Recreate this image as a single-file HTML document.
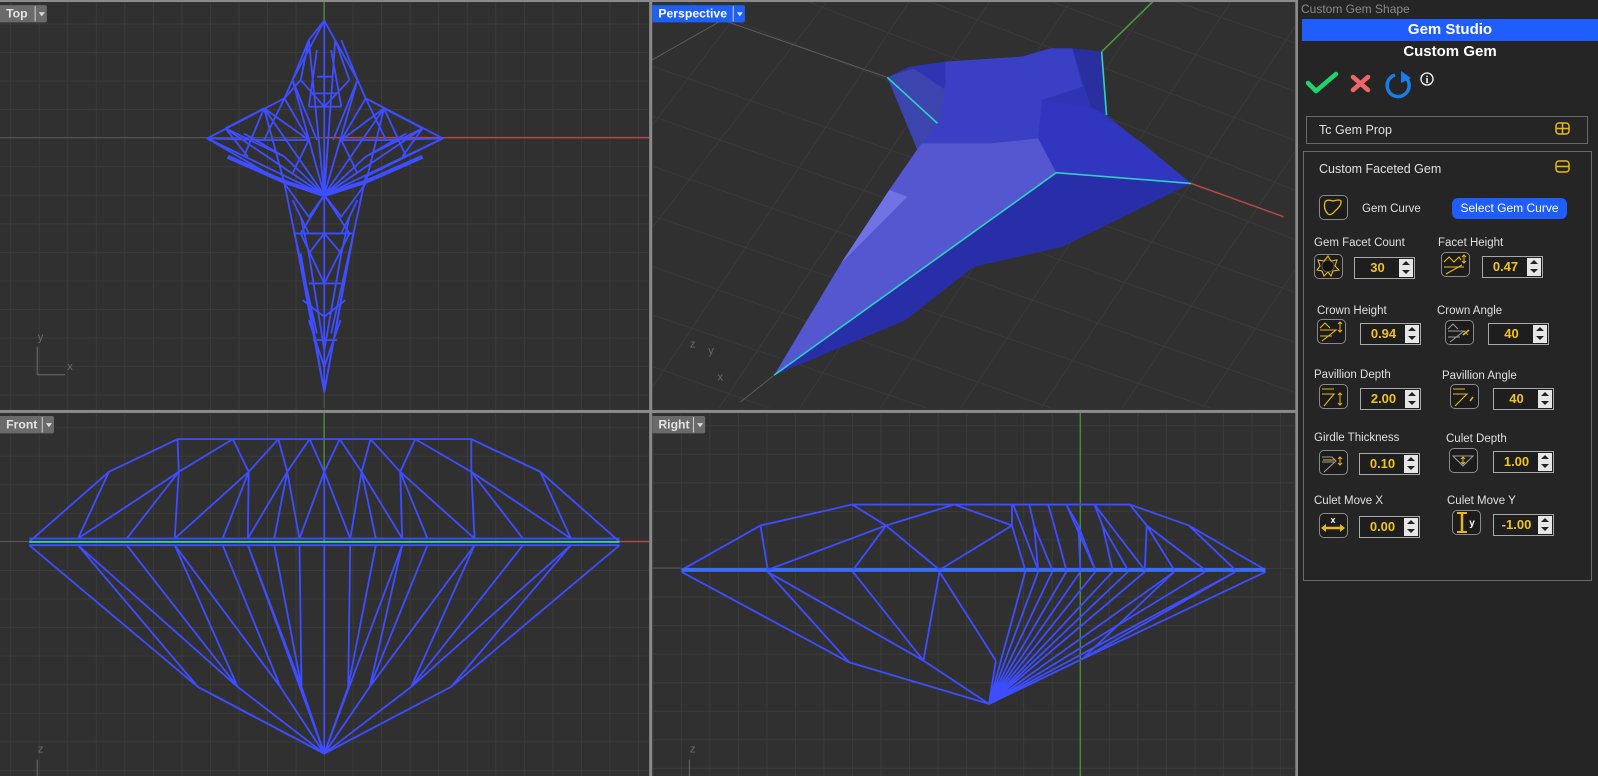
<!DOCTYPE html>
<html><head><meta charset="utf-8"><style>
*{margin:0;padding:0;box-sizing:border-box}
body{width:1598px;height:776px;overflow:hidden;background:#252525;font-family:"Liberation Sans",sans-serif;position:relative}
#vl{position:absolute;left:0;top:0;width:1568px;height:761px;transform:scale(1.0191,1.0197);transform-origin:0 0;background:#8a8a8a}
.vp{position:absolute;overflow:hidden;background-color:#303030;
background-image:linear-gradient(#3b3b3b 1px,transparent 1px),linear-gradient(90deg,#3b3b3b 1px,transparent 1px);background-size:28px 28px}
.tab{position:absolute;left:0;top:3px;height:17px;background:#6a6a6a;color:#e4e4e4;font-size:12px;font-weight:bold;line-height:17px;padding-left:6px;border-radius:0 2px 2px 0}
.tab i{position:absolute;right:0;top:1px;width:12px;height:15px;border-left:1px solid #ccc;font-style:normal}
.tab i:after{content:"";position:absolute;left:3px;top:6px;border:3px solid transparent;border-top:4px solid #ddd}
.ax{position:absolute;color:#6a6a6a;font-size:11px}
svg{position:absolute;left:0;top:0}
.p{position:absolute}
.t{position:absolute;color:#e0e0e0;font-size:11.5px;white-space:nowrap}
.in{position:absolute;width:61px;height:22px;border:1px solid #a8a8a8;background:#1e1e1e}
.in b{position:absolute;left:0;width:45px;top:0;line-height:20px;text-align:center;color:#f2c41a;font-size:13px}
.in s{position:absolute;right:1px;top:1px;width:14px;height:18px;background:#e6e6e6}
.in s:before{content:"";position:absolute;left:3px;top:2px;border:4px solid transparent;border-bottom:4px solid #222;border-top:0}
.in s:after{content:"";position:absolute;left:3px;top:11px;border:4px solid transparent;border-top:4px solid #222;border-bottom:0}
.ic{position:absolute;width:29px;height:25px;border:1.5px solid #8a8a8a;border-radius:5px;background:#1c1c1c}
</style></head><body>
<div id="vl">
<!-- TOP -->
<div class="vp" style="left:0;top:2px;width:637px;height:400px;background-position:10px 21px">
<svg width="637" height="400" style="top:-2px">
<line x1="318" y1="0" x2="318" y2="135" stroke="#4a9a3a" stroke-width="1.2"/>
<line x1="318" y1="135" x2="637" y2="135" stroke="#b04848" stroke-width="1.5"/>
<line x1="0" y1="135" x2="318" y2="135" stroke="#585858"/>
<line x1="318" y1="135" x2="318" y2="400" stroke="#585858"/>
<g transform="scale(0.3987,0.327)" fill="none" stroke="#3d4dff" stroke-width="1.8" stroke-linejoin="round">
<path vector-effect="non-scaling-stroke" d="M798,62 L880,240 L900,295 L1090,415 L900,530 L870,700 L798,1175 L725,700 L700,550 L510,415 L700,295 L720,240 Z"/>
<path vector-effect="non-scaling-stroke" d="M798,62 V1175 M798,585 L510,415 M798,585 L555,385 M798,585 L650,325 M798,585 L720,240 M798,585 L760,120 M798,585 L825,120 M798,585 L880,240 M798,585 L945,325 M798,585 L1040,385 M798,585 L1090,415 M760,120 L798,62 M825,120 L860,240 M760,120 L740,240 L700,295 M650,325 L700,550 M945,325 L900,550 M555,385 L650,325 M1040,385 L945,325 M555,385 L700,470 L798,585 M1040,385 L900,470 L798,585 M700,295 L760,420 M900,295 L840,420 M760,320 L840,320 M798,585 L740,700 L798,850 L860,700 L798,585 M725,700 L780,1000 M870,700 L815,1000 M740,700 L870,700 M725,700 L860,700 M760,850 L840,850 M770,1020 L830,1020 M720,600 L760,700 M880,600 L840,700 M740,760 L798,1175 M860,760 L798,1175
M825,120 L798,585 M780,150 L760,320 M815,150 L840,320 M760,120 L720,240 M840,120 L880,240 M720,240 L780,420 M880,240 L820,420 M740,240 L798,320 M860,240 L798,320 M650,325 L760,420 M945,325 L840,420 M650,325 L600,470 M945,325 L1000,470 M555,385 L610,470 M1040,385 L990,470 M700,295 L650,420 M900,295 L950,420 M510,415 L650,420 L760,420 M1090,415 L950,420 L840,420 M600,400 L700,470 M1000,400 L900,470 M760,420 L720,520 M840,420 L880,520 M700,550 L760,650 L798,585 M900,550 L840,650 L798,585 M740,650 L760,760 L798,700 L840,760 L860,650 M760,760 L798,1050 M840,760 L798,1050 M745,900 L798,950 L850,900 M760,960 L798,1100 L838,960 M780,230 L820,230 M770,280 L830,280"/>
<path vector-effect="non-scaling-stroke" stroke-width="4" d="M560,470 L700,545 L798,585 L900,545 L1040,470"/>
</g>
</svg>
<div class="ax" style="left:37px;top:323px">y</div>
<div class="ax" style="left:66px;top:352px">x</div>
<div style="position:absolute;left:36px;top:338px;width:1px;height:27px;background:#6a6a6a"></div>
<div style="position:absolute;left:36px;top:365px;width:28px;height:1px;background:#6a6a6a"></div>
<div class="tab" style="width:46px">Top<i></i></div>
</div>
<!-- PERSPECTIVE -->
<div class="vp" style="left:640px;top:2px;width:631px;height:400px;background:#303030">
<svg width="631" height="400" style="top:-2px">
<g transform="translate(-12.2,0) scale(0.3948,0.327)">
<g stroke="#3a3a3a" stroke-width="1">
<path vector-effect="non-scaling-stroke" d="M-200,100 L1800,950 M-200,250 L1800,1100 M-200,400 L1800,1250 M-200,550 L1600,1300 M-200,700 L1200,1300 M-200,850 L900,1300 M-200,1000 L500,1300 M0,-50 L1800,800 M300,-50 L1800,650 M600,-50 L1800,500 M900,-50 L1800,350 M1200,-50 L1800,200 M1500,-50 L1800,80
M-100,1400 L700,-50 M100,1400 L900,-50 M300,1400 L1100,-50 M500,1400 L1300,-50 M700,1400 L1500,-50 M900,1400 L1700,-50 M1100,1400 L1800,150 M1300,1400 L1800,500 M-300,1200 L500,-50 M-300,900 L300,-50"/>
</g>
<path d="M205,60 L615,232 M30,180 L205,60" stroke="#5a5a5a" stroke-width="1" vector-effect="non-scaling-stroke" fill="none"/>
<path d="M334,1125 L250,1206" stroke="#5a5a5a" vector-effect="non-scaling-stroke"/>
<path d="M1370,550 L1600,650" stroke="#b04848" stroke-width="1.5" vector-effect="non-scaling-stroke"/>
<path d="M1148,155 L1275,5" stroke="#4a9a3a" stroke-width="1.5" vector-effect="non-scaling-stroke"/>
<path fill="#2e35b5" d="M334,1125 L620,570 L700,430 L615,232 L670,200 L760,185 L950,170 L1020,145 L1075,145 L1148,155 L1160,345 L1370,550 L1050,740 L830,800 L660,960 Z"/>
<path fill="#3a40c4" d="M700,430 L740,370 L760,250 L760,185 L950,170 L1020,145 L1075,145 L1100,260 L1000,300 L990,415 L870,430 Z"/>
<path fill="#3c44ad" d="M615,232 L680,205 L760,270 L740,370 L690,450 Z"/>
<path fill="#2a2fa0" d="M1075,145 L1148,155 L1160,345 L1120,320 L1100,240 Z"/>
<path fill="#3036bf" d="M990,415 L1000,300 L1110,320 L1250,430 L1370,550 L1035,518 Z"/>
<path fill="#5457cf" d="M334,1125 L500,790 L620,570 L700,430 L870,430 L990,415 L1035,518 Z"/>
<path fill="#7073e3" d="M500,790 L620,570 L665,590 Z"/>
<path fill="#282ea8" d="M1035,518 L1370,550 L1050,740 L830,800 L660,960 L334,1125 Z"/>
<path d="M334,1125 L1035,518 L1370,550 M615,232 L740,370 M1148,155 L1160,345" stroke="#2ecfc0" stroke-width="1.6" fill="none" vector-effect="non-scaling-stroke"/>
</g>
</svg>
<div class="ax" style="left:37px;top:330px">z</div>
<div class="ax" style="left:55px;top:336px">y</div>
<div class="ax" style="left:64px;top:362px">x</div>
<div class="tab" style="width:91px;background:#1e60f5;color:#fff">Perspective<i></i></div>
</div>
<!-- FRONT -->
<div class="vp" style="left:0;top:405px;width:637px;height:356px;background-position:10px 14px">
<svg width="637" height="356">
<line x1="318" y1="0" x2="318" y2="126" stroke="#4a9a3a" stroke-width="1.2"/>
<line x1="608" y1="126" x2="637" y2="126" stroke="#b04848" stroke-width="1.5"/>
<line x1="0" y1="126" x2="28" y2="126" stroke="#585858"/>
<g transform="translate(0,-12.6) scale(0.3987,0.327)" fill="none" stroke="#3d4dff" stroke-width="1.8">
<path vector-effect="non-scaling-stroke" d="M72,425 L268,215 L437,117 L1160,117 L1330,215 L1525,425 M72,415 H1525 M72,435 H1525 M72,435 L487,860 L798,1060 L1110,860 L1525,435"/>
<path vector-effect="non-scaling-stroke" d="M268,215 L192,415 M440,215 L437,117 M440,215 L573,117 M612,215 L573,117 M612,215 L685,117 M707,215 L685,117 M707,215 L762,117 M798,215 L762,117 M798,215 L836,117 M890,215 L836,117 M890,215 L912,117 M985,215 L912,117 M985,215 L1022,117 M1160,215 L1022,117 M1160,215 L1160,117 M1330,215 L1160,117 M440,215 L192,415 M440,215 L312,415 M440,215 L430,415 M612,215 L430,415 M612,215 L548,415 M612,215 L610,415 M707,215 L610,415 M707,215 L675,415 M707,215 L737,415 M798,215 L737,415 M798,215 L798,415 M798,215 L862,415 M890,215 L862,415 M890,215 L925,415 M890,215 L990,415 M985,215 L990,415 M985,215 L1052,415 M1160,215 L1168,415 M1160,215 L1287,415 M1160,215 L1405,415 M1330,215 L1405,415 M985,215 L1168,415"/>
<path vector-effect="non-scaling-stroke" d="M192,435 L487,860 M192,435 L585,860 M312,435 L585,860 M430,435 L585,860 M430,435 L690,860 M548,435 L690,860 M610,435 L742,860 M675,435 L742,860 M737,435 L742,860 M798,435 L798,1060 M862,435 L857,860 M925,435 L857,860 M990,435 L910,860 M1052,435 L910,860 M1168,435 L1012,860 M1168,435 L910,860 M1287,435 L1012,860 M1405,435 L1012,860 M1405,435 L1110,860 M487,860 L798,1060 M585,860 L798,1060 M690,860 L798,1060 M742,860 L798,1060 M857,860 L798,1060 M910,860 L798,1060 M1012,860 L798,1060 M610,435 L798,1060 M990,435 L798,1060"/>
<path vector-effect="non-scaling-stroke" stroke="#2ecfa0" stroke-width="2" d="M72,425 H1525"/>
</g>
</svg>
<div class="ax" style="left:37px;top:324px">z</div>
<div style="position:absolute;left:36px;top:340px;width:1px;height:20px;background:#6a6a6a"></div>
<div class="tab" style="width:53px">Front<i></i></div>
</div>
<!-- RIGHT -->
<div class="vp" style="left:640px;top:405px;width:631px;height:356px;background-position:0 12px">
<svg width="631" height="356">
<line x1="420" y1="0" x2="420" y2="356" stroke="#4a9a3a" stroke-width="1.2"/>
<line x1="0" y1="152" x2="28" y2="152" stroke="#585858"/>
<g transform="translate(-12.2,-10.6) scale(0.3948,0.327)" fill="none" stroke="#3d4dff" stroke-width="1.8">
<path vector-effect="non-scaling-stroke" d="M104,503 L300,370 L528,307 L1218,307 L1365,370 L1555,503 M104,509 L520,780 L868,905 L1100,770 L1555,509"/>
<path vector-effect="non-scaling-stroke" stroke="#3a6cf0" stroke-width="4" d="M104,503 H1555"/>
<path vector-effect="non-scaling-stroke" d="M300,370 L318,503 M528,307 L612,370 M612,370 L318,503 M612,370 L530,503 M612,370 L745,503 M612,370 L782,307 M782,307 L925,370 M925,370 L745,503 M925,370 L958,503 M925,307 L925,370 M968,307 L980,370 M980,370 L990,503 M980,370 L1025,503 M1015,307 L1030,370 M1030,370 L1060,503 M1060,307 L1090,370 M1090,370 L1095,503 M1090,370 L1132,503 M1130,307 L1150,370 M1150,370 L1175,503 M1150,370 L1213,503 M1218,307 L1260,370 M1260,370 L1255,503 M1260,370 L1328,503 M1365,370 L1480,503 M1260,370 L1405,503 M928,307 L990,503 M1060,307 L1132,503 M1130,307 L1255,503"/>
<path vector-effect="non-scaling-stroke" d="M318,509 L520,780 M318,509 L705,775 M530,509 L705,775 M745,509 L705,775 M745,509 L885,775 M705,775 L868,905 M885,775 L868,905 M958,509 L868,905 M990,509 L868,905 M1025,509 L868,905 M1060,509 L868,905 M1095,509 L868,905 M1132,509 L868,905 M1175,509 L868,905 M1213,509 L868,905 M1255,509 L868,905 M1328,509 L868,905 M1405,509 L868,905 M1480,509 L868,905 M1328,509 L1100,770 M1480,509 L1100,770"/>
</g>
</svg>
<div class="ax" style="left:37px;top:324px">z</div>
<div style="position:absolute;left:36px;top:340px;width:1px;height:20px;background:#6a6a6a"></div>
<div class="tab" style="width:52px">Right<i></i></div>
</div>
</div>

<!-- PANEL -->
<div class="p" style="left:1296px;top:0;width:2px;height:776px;background:#8a8a8a"></div>
<div class="p" style="left:1298px;top:0;width:300px;height:776px;background:#252525"></div>
<div class="t" style="left:1301px;top:2px;color:#8a8a8a;font-size:12px">Custom Gem Shape</div>
<div class="p" style="left:1302px;top:19px;width:296px;height:22px;background:#1f5dff;color:#fff;font-weight:bold;font-size:15px;text-align:center;line-height:22px">Gem Studio</div>
<div class="p" style="left:1302px;top:43px;width:296px;color:#fff;font-weight:bold;font-size:15px;text-align:center">Custom Gem</div>
<svg class="p" style="left:1305px;top:70px" width="135" height="30">
<path d="M3,13 L11,21 L31,4" stroke="#20d36a" stroke-width="4.5" fill="none" stroke-linecap="round" stroke-linejoin="round"/>
<path d="M48,7 L63,20 M63,7 L48,20" stroke="#f06666" stroke-width="4.5" stroke-linecap="round"/>
<path d="M90,5 A11,11 0 1 0 102,9" stroke="#1a7ee8" stroke-width="3.5" fill="none"/>
<path d="M96,1 L106,8 L96,13 Z" fill="#1a7ee8"/>
<circle cx="122" cy="9" r="6" stroke="#fff" stroke-width="1.3" fill="none"/>
<text x="122" y="13" fill="#fff" font-size="10" font-weight="bold" text-anchor="middle" font-family="Liberation Serif">i</text>
</svg>
<div class="p" style="left:1306px;top:116px;width:282px;height:28px;border:1.5px solid #6a6a6a"></div>
<div class="t" style="left:1319px;top:123px;font-size:12.5px">Tc Gem Prop</div>
<svg class="p" style="left:1555px;top:122px" width="16" height="14"><rect x="1" y="1" width="13" height="11" rx="3" fill="none" stroke="#e8b81a" stroke-width="1.5"/><path d="M7.5,1 V12 M1,6.5 H14" stroke="#e8b81a" stroke-width="1.5"/></svg>
<div class="p" style="left:1303px;top:151px;width:289px;height:430px;border:1.5px solid #6a6a6a"></div>
<div class="t" style="left:1319px;top:162px;font-size:12.5px">Custom Faceted Gem</div>
<svg class="p" style="left:1555px;top:160px" width="16" height="14"><rect x="1" y="1" width="13" height="11" rx="3" fill="none" stroke="#e8b81a" stroke-width="1.5"/><path d="M1,6.5 H14" stroke="#e8b81a" stroke-width="1.5"/></svg>
<div class="ic" style="left:1319px;top:195px"><svg width="26" height="22"><path d="M5,6 Q7,3 13,5 Q20,3 21,5 Q22,9 15,15 Q11,20 8,18 Q3,13 5,6 Z" fill="none" stroke="#e8b81a" stroke-width="1.3"/></svg></div>
<div class="t" style="left:1362px;top:203px">Gem Curve</div>
<div class="p" style="left:1452px;top:198px;width:115px;height:21px;background:#1f5dff;border-radius:6px;color:#fff;font-size:12px;text-align:center;line-height:21px">Select Gem Curve</div>

<div class="t" style="left:1314px;top:237px">Gem Facet Count</div>
<div class="t" style="left:1438px;top:237px">Facet Height</div>
<div class="ic" style="left:1314px;top:254px"><svg width="26" height="22"><circle cx="13" cy="11" r="6" fill="#111" stroke="#555"/><path d="M13,1 L16,6 L22,5 L20,11 L24,15 L18,16 L16,21 L13,17 L9,21 L7,16 L2,15 L5,11 L3,5 L9,6 Z" fill="none" stroke="#e8b81a" stroke-width="1.1"/></svg></div>
<div class="in" style="left:1354px;top:257px"><b>30</b><s></s></div>
<div class="ic" style="left:1441px;top:252px"><svg width="26" height="22"><path d="M2,9 L7,4 L12,9 L17,4 L19,7 M2,14 L22,14 M4,21 L20,12" fill="none" stroke="#e8b81a" stroke-width="1.1"/><path d="M22,2 V10 M20,4 L22,2 L24,4 M20,8 L22,10 L24,8" stroke="#e8b81a" fill="none"/></svg></div>
<div class="in" style="left:1482px;top:256px"><b>0.47</b><s></s></div>

<div class="t" style="left:1317px;top:305px">Crown Height</div>
<div class="t" style="left:1437px;top:305px">Crown Angle</div>
<div class="ic" style="left:1317px;top:319px"><svg width="26" height="22"><path d="M2,8 L7,3 L12,8 M2,10 H18 L4,21 M2,16 H14" fill="none" stroke="#e8b81a" stroke-width="1.1"/><path d="M22,2 V12 M20,4 L22,2 L24,4 M20,10 L22,12 L24,10" stroke="#e8b81a" fill="none"/></svg></div>
<div class="in" style="left:1360px;top:323px"><b>0.94</b><s></s></div>
<div class="ic" style="left:1445px;top:320px"><svg width="26" height="22"><path d="M2,8 L7,3 L12,8 M2,10 H18 L4,21 M2,16 H14 M18,10 L22,14" fill="none" stroke="#9a9a9a" stroke-width="1.1"/><path d="M17,14 L23,9" stroke="#e8b81a" stroke-width="1.5"/></svg></div>
<div class="in" style="left:1488px;top:323px"><b>40</b><s></s></div>

<div class="t" style="left:1314px;top:369px">Pavillion Depth</div>
<div class="t" style="left:1442px;top:370px">Pavillion Angle</div>
<div class="ic" style="left:1319px;top:384px"><svg width="26" height="22"><path d="M2,4 H14 M2,9 H14 L4,21" fill="none" stroke="#e8b81a" stroke-width="1.1"/><path d="M20,8 V20 M18,10 L20,8 L22,10 M18,18 L20,20 L22,18" stroke="#e8b81a" fill="none"/></svg></div>
<div class="in" style="left:1360px;top:388px"><b>2.00</b><s></s></div>
<div class="ic" style="left:1450px;top:384px"><svg width="26" height="22"><path d="M2,4 H14 M2,9 H16 L4,21" fill="none" stroke="#e8b81a" stroke-width="1.1"/><path d="M19,16 L22,12" stroke="#e8b81a" stroke-width="1.5"/></svg></div>
<div class="in" style="left:1493px;top:388px"><b>40</b><s></s></div>

<div class="t" style="left:1314px;top:432px">Girdle Thickness</div>
<div class="t" style="left:1446px;top:433px">Culet Depth</div>
<div class="ic" style="left:1319px;top:450px"><svg width="26" height="22"><path d="M2,6 H12 L16,10 L4,21 M2,11 H14" fill="none" stroke="#9a9a9a" stroke-width="1.1"/><path d="M3,9 H15" stroke="#e8b81a"/><path d="M20,6 V14 M18,8 L20,6 L22,8 M18,12 L20,14 L22,12" stroke="#e8b81a" fill="none"/></svg></div>
<div class="in" style="left:1359px;top:453px"><b>0.10</b><s></s></div>
<div class="ic" style="left:1449px;top:448px"><svg width="26" height="22"><path d="M3,7 H23 L13,17 Z" fill="none" stroke="#9a9a9a" stroke-width="1.1"/><path d="M13,8 V15 M11,10 L13,8 L15,10 M11,13 L13,15 L15,13" stroke="#e8b81a" fill="none"/></svg></div>
<div class="in" style="left:1493px;top:451px"><b>1.00</b><s></s></div>

<div class="t" style="left:1314px;top:495px">Culet Move X</div>
<div class="t" style="left:1447px;top:495px">Culet Move Y</div>
<div class="ic" style="left:1319px;top:513px"><svg width="26" height="22"><path d="M1,14 L6,10 V18 Z M25,14 L20,10 V18 Z" fill="#e8b81a"/><path d="M5,14 H21" stroke="#e8b81a" stroke-width="2.5"/><text x="13" y="9" fill="#fff" font-size="9" font-weight="bold" text-anchor="middle" font-family="Liberation Sans">x</text></svg></div>
<div class="in" style="left:1359px;top:516px"><b>0.00</b><s></s></div>
<div class="ic" style="left:1452px;top:510px"><svg width="26" height="22"><path d="M9,3 V20" stroke="#e8b81a" stroke-width="2.5"/><path d="M4,2 H14 M4,21 H14" stroke="#e8b81a" stroke-width="2"/><text x="19" y="15" fill="#fff" font-size="10" font-weight="bold" text-anchor="middle" font-family="Liberation Sans">y</text></svg></div>
<div class="in" style="left:1493px;top:514px"><b>-1.00</b><s></s></div>
</body></html>
